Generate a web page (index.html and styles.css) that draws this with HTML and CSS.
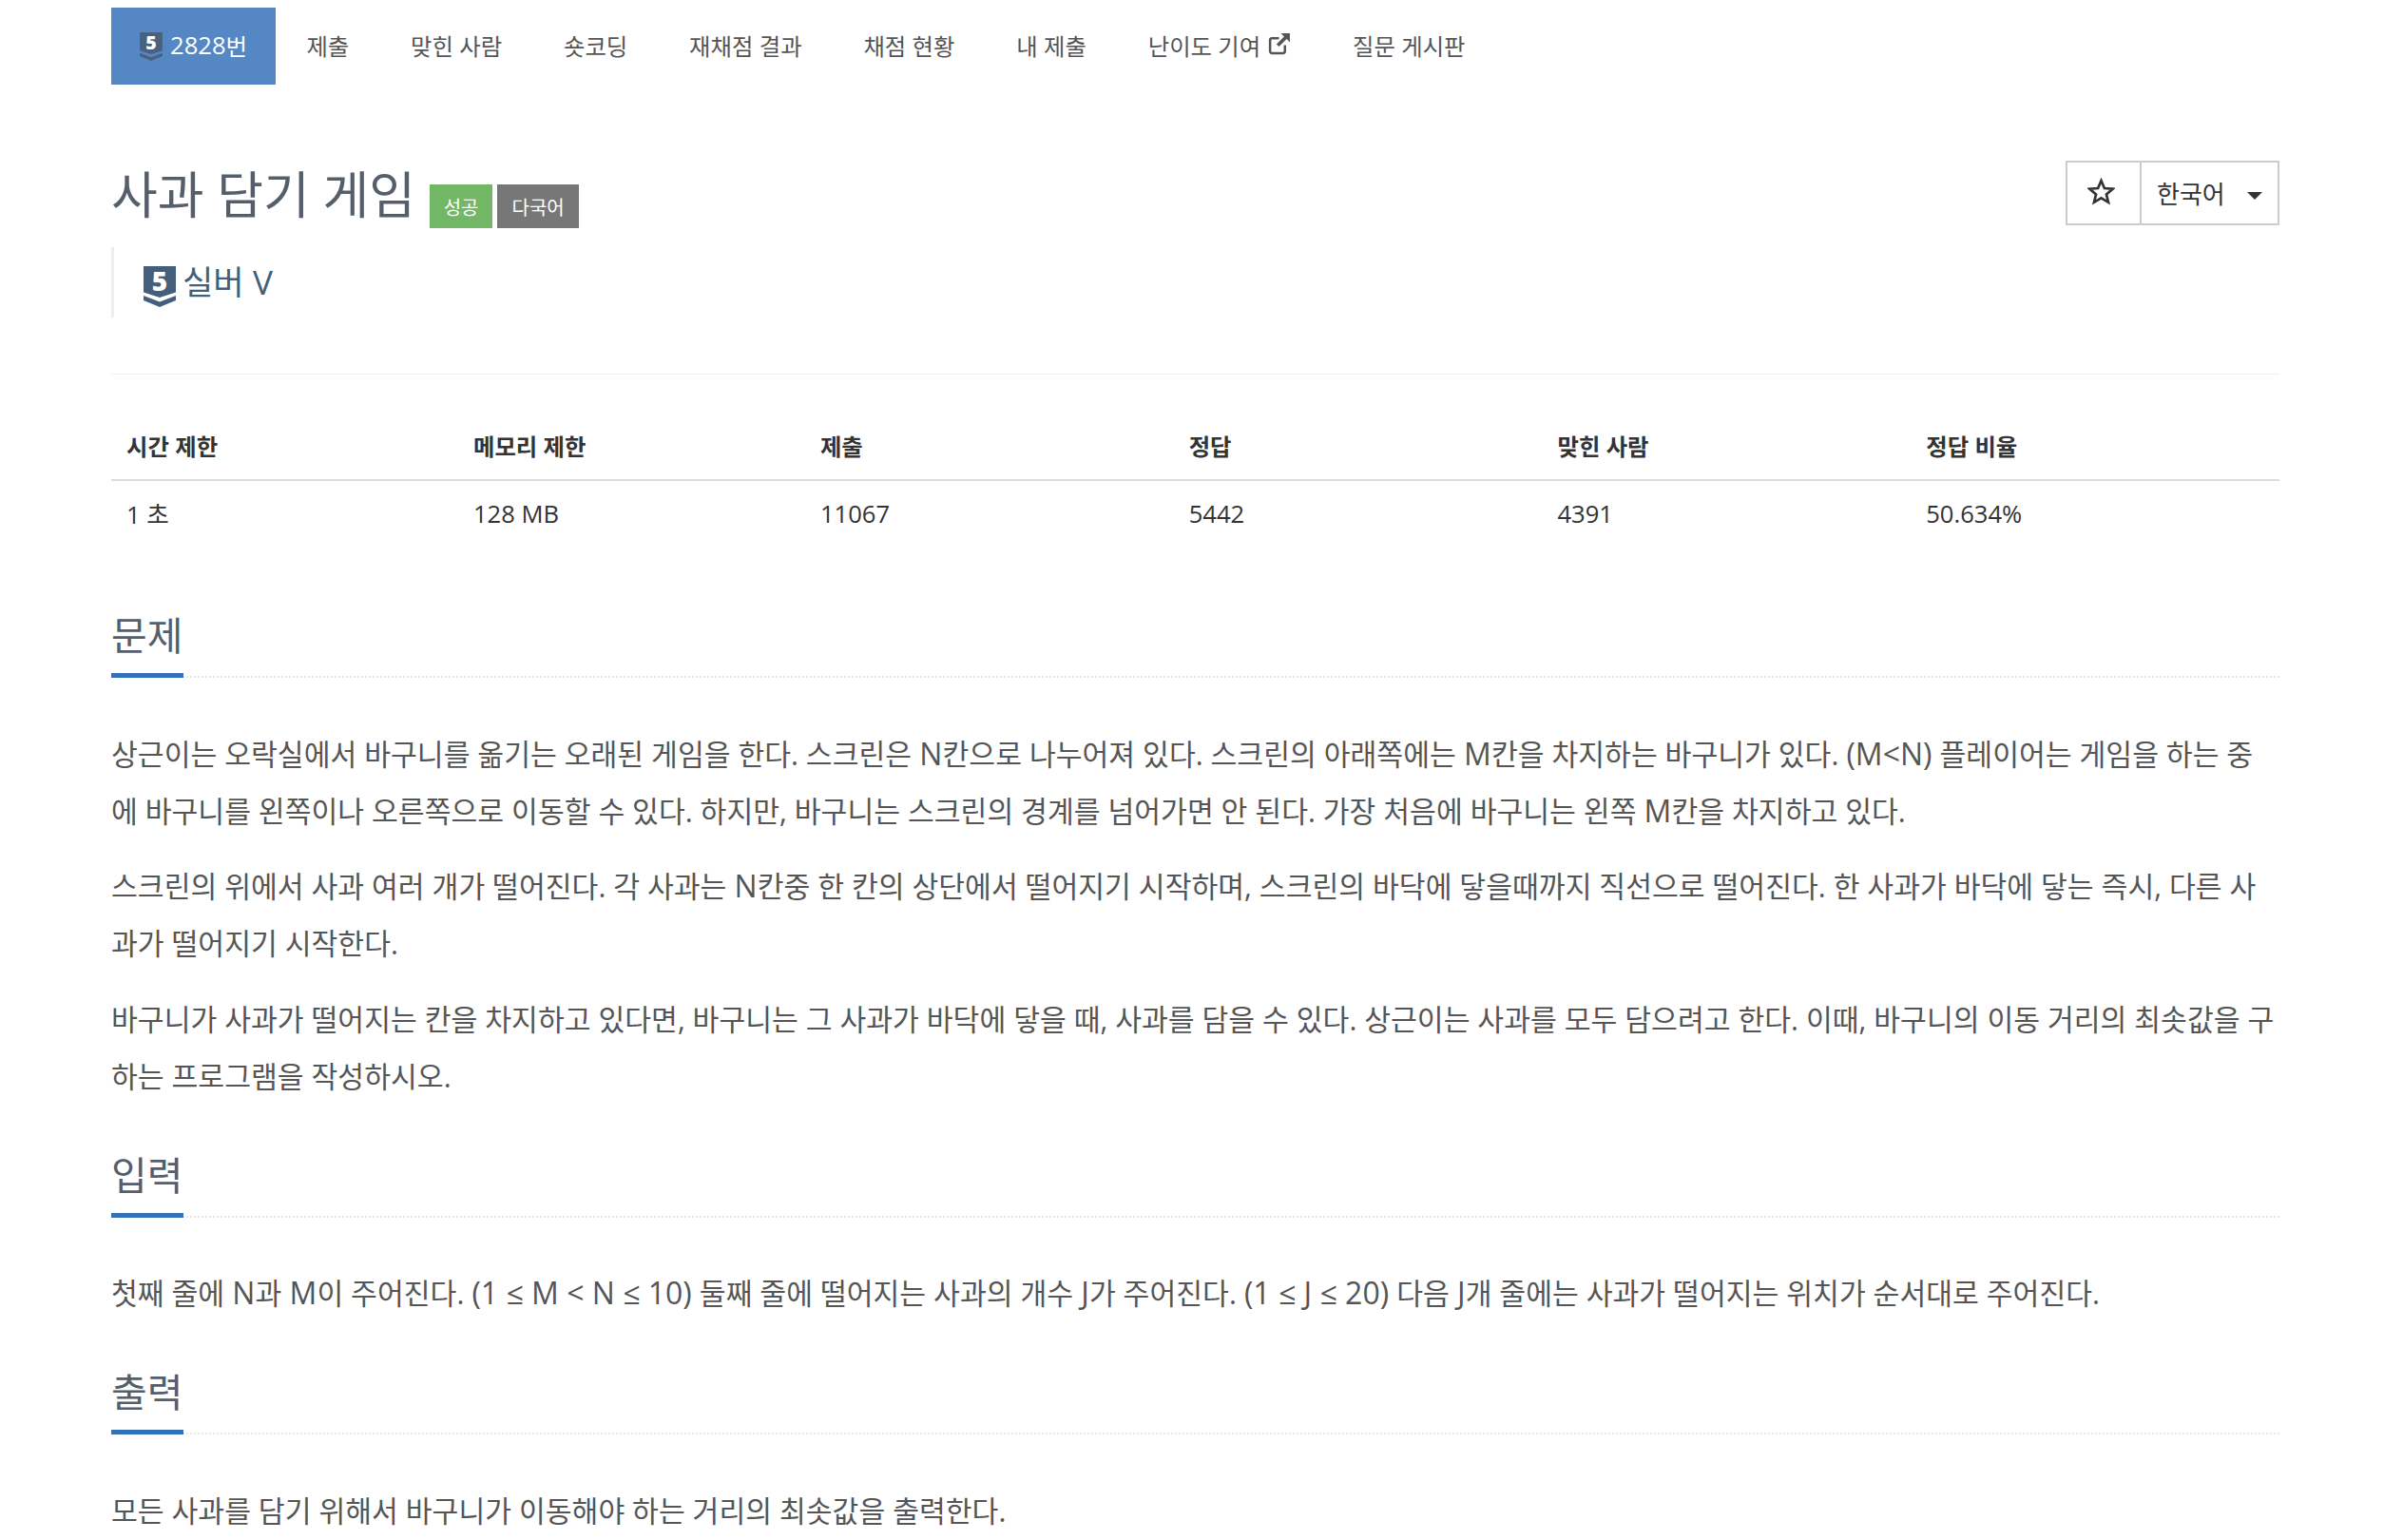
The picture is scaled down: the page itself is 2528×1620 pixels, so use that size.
FILE: index.html
```html
<!DOCTYPE html>
<html lang="ko">
<head>
<meta charset="utf-8">
<title>사과 담기 게임</title>
<link rel="stylesheet" href="styles.css">
</head>
<body>
<div class="container">
  <nav class="tabs">
    <a class="tab active"><svg class="tier tier-nav" viewBox="0 0 34 43"><path d="M0 0H34V27.500L17 33L0 27.500Z" fill="currentColor"/><path d="M0 31L17 37.500L34 31V36L17 43L0 36Z" fill="currentColor"/><text x="17" y="26" text-anchor="middle" class="tier-num">5</text></svg><span class="nav-num">2828</span>번</a>
    <a class="tab">제출</a>
    <a class="tab">맞힌 사람</a>
    <a class="tab">숏코딩</a>
    <a class="tab">재채점 결과</a>
    <a class="tab">채점 현황</a>
    <a class="tab">내 제출</a>
    <a class="tab">난이도 기여<svg class="ext" viewBox="0 0 24 24"><path d="M18 13v6a2 2 0 0 1-2 2H5a2 2 0 0 1-2-2V8a2 2 0 0 1 2-2h7" fill="none" stroke="currentColor" stroke-width="2.4"/><path d="M14 1h9v9l-3.200-3.200L12 14.500 9.500 12l7.700-7.800Z" fill="currentColor"/></svg></a>
    <a class="tab">질문 게시판</a>
  </nav>

  <header class="head">
    <div class="title-row">
      <h1 class="title">사과 담기 게임</h1>
      <span class="label label-ok">성공</span>
      <span class="label label-lang">다국어</span>
    </div>
    <div class="btns">
      <button class="btn btn-star"><svg class="star" viewBox="0 0 24 24"><path d="M12 2.500l2.800 6.600 7.200.6-5.500 4.700 1.700 7-6.200-3.700-6.200 3.700 1.700-7L2 9.700l7.200-.6Z" fill="none" stroke="currentColor" stroke-width="2.200"/></svg></button>
      <button class="btn btn-lang">한국어<span class="caret"></span></button>
    </div>
  </header>

  <blockquote class="tier-box"><svg class="tier tier-big" viewBox="0 0 34 43"><path d="M0 0H34V27.500L17 33L0 27.500Z" fill="currentColor"/><path d="M0 31L17 37.500L34 31V36L17 43L0 36Z" fill="currentColor"/><text x="17" y="26" text-anchor="middle" class="tier-num">5</text></svg>실버 V</blockquote>

  <hr class="rule">

  <table class="info">
    <thead>
      <tr><th>시간 제한</th><th>메모리 제한</th><th>제출</th><th>정답</th><th>맞힌 사람</th><th>정답 비율</th></tr>
    </thead>
    <tbody>
      <tr><td>1 초</td><td>128 MB</td><td>11067</td><td>5442</td><td>4391</td><td>50.634%</td></tr>
    </tbody>
  </table>

  <section class="sec sec-first">
    <h2 class="sec-title"><span>문제</span></h2>
    <p>상근이는 오락실에서 바구니를 옮기는 오래된 게임을 한다. 스크린은 <b class="en">N</b>칸으로 나누어져 있다. 스크린의 아래쪽에는 <b class="en">M</b>칸을 차지하는 바구니가 있다. <b class="en">(M&lt;N)</b> 플레이어는 게임을 하는 중<br>에 바구니를 왼쪽이나 오른쪽으로 이동할 수 있다. 하지만, 바구니는 스크린의 경계를 넘어가면 안 된다. 가장 처음에 바구니는 왼쪽 <b class="en">M</b>칸을 차지하고 있다.</p>
    <p>스크린의 위에서 사과 여러 개가 떨어진다. 각 사과는 <b class="en">N</b>칸중 한 칸의 상단에서 떨어지기 시작하며, 스크린의 바닥에 닿을때까지 직선으로 떨어진다. 한 사과가 바닥에 닿는 즉시, 다른 사과가 떨어지기 시작한다.</p>
    <p>바구니가 사과가 떨어지는 칸을 차지하고 있다면, 바구니는 그 사과가 바닥에 닿을 때, 사과를 담을 수 있다. 상근이는 사과를 모두 담으려고 한다. 이때, 바구니의 이동 거리의 최솟값을 구하는 프로그램을 작성하시오.</p>
  </section>
  <section class="sec">
    <h2 class="sec-title"><span>입력</span></h2>
    <p>첫째 줄에 <b class="en">N</b>과 <b class="en">M</b>이 주어진다. <b class="en">(1 ≤ M &lt; N ≤ 10)</b> 둘째 줄에 떨어지는 사과의 개수 <b class="en">J</b>가 주어진다. <b class="en">(1 ≤ J ≤ 20)</b> 다음 <b class="en">J</b>개 줄에는 사과가 떨어지는 위치가 순서대로 주어진다.</p>
  </section>
  <section class="sec">
    <h2 class="sec-title"><span>출력</span></h2>
    <p>모든 사과를 담기 위해서 바구니가 이동해야 하는 거리의 최솟값을 출력한다.</p>
  </section>
</div>
</body>
</html>
```
FILE: styles.css
```css
* { box-sizing: border-box; }
html, body { margin: 0; padding: 0; background: #fff; }
body {
  font-family: "Open Sans", "Noto Sans CJK KR", sans-serif;
  font-size: 24.400px;
  color: #555;
  overflow: hidden;
  height: 1620px;
}
.container { width: 2281px; margin-left: 117px; padding-top: 8px; }

.tabs { display: flex; height: 81px; }
.tab { display: flex; align-items: center; padding: 0 32.400px 3px; color: #555; }
.tab.active { background: #5487c4; color: #fff; padding: 0 30px 3px 30px; }
.nav-num { font-size: 25.600px; }
.tier { color: #49607e; overflow: visible; }
.tier-nav { width: 24px; height: 30px; margin-right: 8px; margin-top: 3px; }
.tier-num { font: 800 28px/1 "Open Sans", sans-serif; fill: #fff; }
.ext { width: 25px; height: 25px; margin-left: 7px; margin-top: -2px; color: #555; }

.head { display: flex; justify-content: space-between; align-items: flex-start; margin-top: 80px; height: 91px; }
.title-row { display: flex; align-items: flex-end; }
.title { margin: 0; font-size: 53px; font-weight: 400; line-height: 72px; color: #555e6b; }
.label { display: flex; align-items: center; justify-content: center; height: 46px; color: #fff; font-size: 20px; margin-bottom: 1px; }
.label-ok { width: 66px; margin-left: 15px; background: #72b765; }
.label-lang { width: 86px; margin-left: 5px; background: #777; }

.btns { display: flex; height: 68px; border: 2px solid #ccc; }
.btn { background: #fff; border: 0; padding: 0; font-family: inherit; font-size: 26px; color: #333; display: flex; align-items: center; }
.btn-star { width: 78px; justify-content: center; border-right: 2px solid #ccc; padding-right: 6px; }
.star { width: 29px; height: 29px; margin-top: -3px; }
.btn-lang { width: 143px; padding-left: 16px; }
.caret { width: 0; height: 0; margin-left: 23px; margin-top: 6px; border-left: 8px solid transparent; border-right: 8px solid transparent; border-top: 8px solid #333; }

.tier-box { display: flex; align-items: center; height: 74px; margin: 0; padding: 0 0 6px 31px; border-left: 3px solid #eee; font-size: 35.200px; color: #435f7c; }
.tier-big { width: 34px; height: 43px; margin-right: 7px; margin-top: 14px; color: #435f7c; }

.rule { margin: 59px 0 0; border: 0; border-top: 1px solid #eee; }

.info { width: 100%; margin-top: 45px; border-collapse: collapse; table-layout: fixed; color: #333; }
.info th { text-align: left; font-weight: 700; height: 66px; padding: 0 16px 6px; border-bottom: 2px solid #ddd; }
.info th:nth-child(1), .info th:nth-child(2) { width: 16%; }
.info td { height: 71px; padding: 0 16px 2px; font-size: 25.600px; }

.sec-first { margin-top: 63px; }
.sec-title { margin: 0; font-size: 41px; font-weight: 400; line-height: 58px; height: 74px; color: #555e6b; border-bottom: 2px dotted #e6e6e6; }
.sec-title span { display: inline-block; height: 74px; padding-right: 1px; border-bottom: 5px solid #3371b9; }
.sec p { margin: 0; font-size: 30.250px; line-height: 60px; }
.sec p + p { margin-top: 19.500px; }
.sec-title + p { margin-top: 50.500px; }
.sec + .sec { margin-top: 44px; }
.en { font-size: 32px; font-weight: 400; line-height: 1; margin: 0 0.2px; }
```
